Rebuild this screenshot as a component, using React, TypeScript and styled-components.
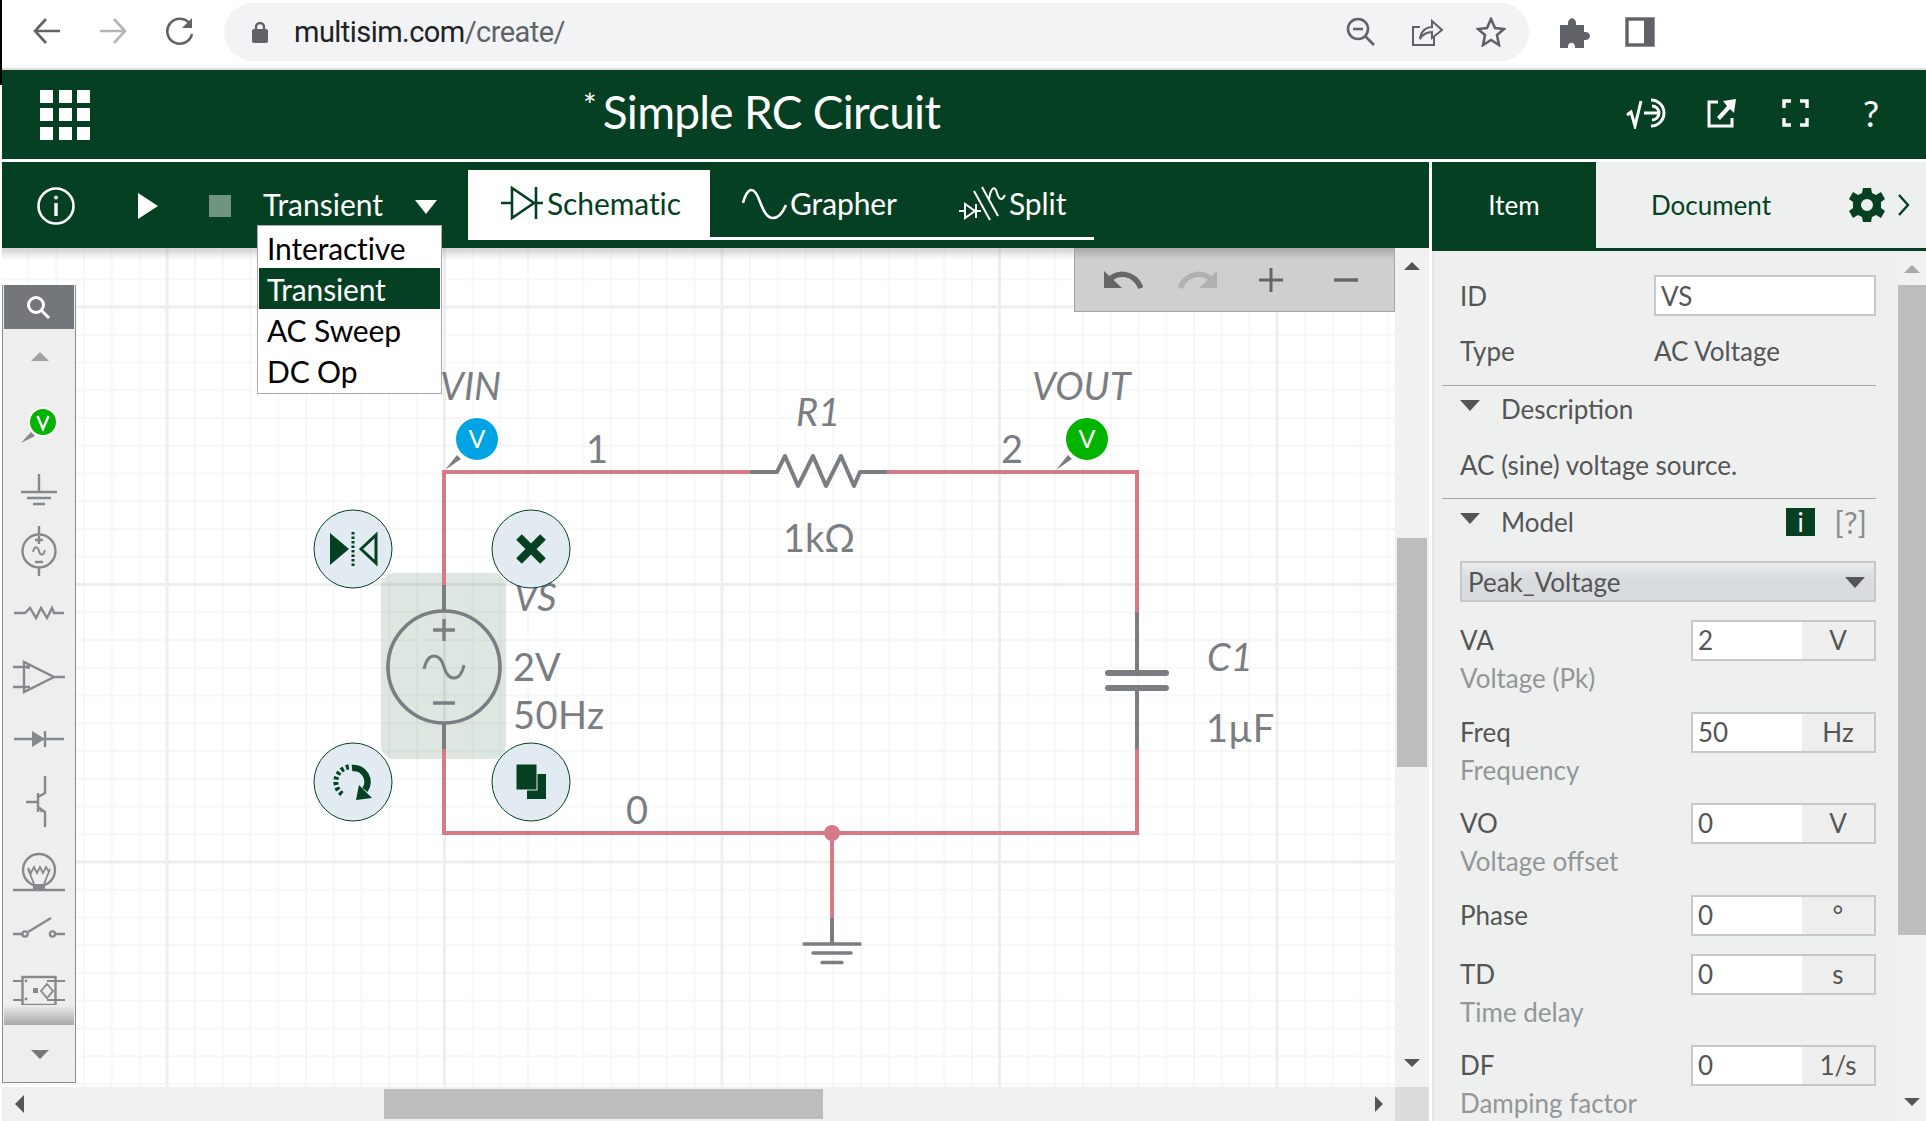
import React from "react";
import styled, { createGlobalStyle } from "styled-components";

const GREEN = "#054023";
const WIRE = "#d67a88";
const PART = "#7a7d82";

const GlobalStyle = createGlobalStyle`
  html, body {
    margin: 0;
    padding: 0;
    width: 1926px;
    height: 1121px;
    overflow: hidden;
    background: #fff;
    font-family: "Lato", "Liberation Sans", sans-serif;
  }
  * { box-sizing: border-box; }
`;

const Page = styled.div`
  position: relative;
  width: 1926px;
  height: 1121px;
  overflow: hidden;
  display: flex;
  flex-direction: column;
`;
const EdgeStrip = styled.div`
  position: absolute;
  left: 0;
  top: 0;
  width: 2px;
  height: 85px;
  background: #000;
  z-index: 9;
`;

/* browser bar */
const BrowserBar = styled.div`
  height: 70px;
  flex: none;
  display: flex;
  align-items: flex-start;
  padding: 3px 0 0 33px;
  border-bottom: 2px solid #dedfe0;
  background: #fff;
`;
const BrowserIcon = styled.svg<{ $gap: number; $faded?: boolean }>`
  flex: none;
  margin-left: ${(p) => p.$gap}px;
  fill: none;
  stroke: ${(p) => (p.$faded ? "#b3b5b8" : "#5f6368")};
  stroke-width: 2.6;
`;
const Omnibox = styled.div`
  flex: none;
  width: 1305px;
  height: 58px;
  margin-left: 29px;
  border-radius: 29px;
  background: #f1f3f4;
  display: flex;
  align-items: center;
  padding-left: 28px;
`;
const Url = styled.div`
  margin-left: 26px;
  font-family: "Roboto", sans-serif;
  font-size: 29px;
  letter-spacing: -0.55px;
  color: #202124;
  flex: 1;
  span { color: #5f6368; }
`;
const OmniEnd = styled.div`
  width: 23px;
  flex: none;
`;

/* app header */
const AppHeader = styled.div`
  height: 92px;
  flex: none;
  background: ${GREEN};
  border-bottom: 3px solid #fff;
  margin-left: 2px;
  display: flex;
  align-items: center;
  color: #fff;
`;
const AppGrid = styled.div`
  margin-left: 38px;
  width: 50px;
  height: 50px;
  display: grid;
  grid-template-columns: repeat(3, 13px);
  grid-template-rows: repeat(3, 13px);
  justify-content: space-between;
  align-content: space-between;
  i { background: #fff; }
`;
const Title = styled.div`
  margin: -5px 0 0 493px;
  width: 700px;
  font-size: 46px;
  letter-spacing: -0.75px;
  line-height: 50px;
  display: flex;
  sup {
    font-size: 32px;
    line-height: 36px;
    margin-right: 7px;
  }
`;
const HeaderIcons = styled.div`
  margin: -4px 0 0 343px;
  display: flex;
  align-items: center;
  gap: 39px;
  svg { display: block; }
`;
const Help = styled.span`
  font-size: 36px;
  margin-left: 15px;
  line-height: 40px;
`;

/* main */
const Main = styled.div`
  flex: 1;
  display: flex;
  min-height: 0;
  margin-left: 2px;
`;
const Editor = styled.div`
  position: relative;
  width: 1427px;
  flex: none;
  display: flex;
  flex-direction: column;
  background: #f0f0f0;
`;
const Toolbar = styled.div`
  height: 86px;
  flex: none;
  background: ${GREEN};
  display: flex;
  align-items: flex-start;
  color: #fff;
  font-size: 30px;
`;
const RunIcons = styled.div`
  display: flex;
  align-items: center;
  margin: 25px 0 0 35px;
  svg { display: block; }
`;
const StopSquare = styled.div`
  width: 22px;
  height: 22px;
  background: #6f9580;
  margin-left: 51px;
`;
const ModeLabel = styled.div`
  margin: 23px 0 0 32px;
  width: 152px;
  line-height: 38px;
`;
const ModeCaret = styled.div`
  width: 0;
  height: 0;
  margin: 38px 0 0 0;
  border-left: 11px solid transparent;
  border-right: 11px solid transparent;
  border-top: 14px solid #fff;
`;
const ViewTabs = styled.div`
  margin: 8px 0 0 31px;
  width: 626px;
  height: 70px;
  display: flex;
  border-bottom: 3px solid #fff;
`;
const ViewTab = styled.div<{ $active?: boolean; $width: number; $pad: number }>`
  width: ${(p) => p.$width}px;
  height: 70px;
  padding: 0 0 4px ${(p) => p.$pad}px;
  display: flex;
  align-items: center;
  gap: 3px;
  letter-spacing: -0.1px;
  background: ${(p) => (p.$active ? "#fff" : "transparent")};
  color: ${(p) => (p.$active ? GREEN : "#fff")};
  svg { flex: none; fill: none; stroke: currentColor; stroke-width: 2.6; }
`;

const CanvasRow = styled.div`
  flex: 1;
  display: flex;
  min-height: 0;
`;
const Canvas = styled.div`
  position: relative;
  width: 1393px;
  flex: none;
  overflow: hidden;
  background-color: #fff;
  background-image:
    linear-gradient(to bottom, #eeeeee 3px, transparent 3px),
    linear-gradient(to right, #eeeeee 3px, transparent 3px),
    linear-gradient(to bottom, #f7f7f7 2px, transparent 2px),
    linear-gradient(to right, #f7f7f7 2px, transparent 2px);
  background-size: 100% 277.5px, 277.5px 100%, 100% 27.75px, 27.75px 100%;
  background-repeat: repeat;
  background-position: 0 57.5px, 163.5px 0, 0 2.5px, 25.5px 0;
  &::before {
    content: "";
    position: absolute;
    left: 0;
    right: 0;
    top: 0;
    height: 12px;
    background: linear-gradient(rgba(60, 60, 60, 0.22), rgba(60, 60, 60, 0));
    z-index: 2;
  }
`;
const Diagram = styled.svg`
  position: absolute;
  left: -2px;
  top: 1px;
  font-family: "Lato", sans-serif;
  fill: ${PART};
`;
const VScroll = styled.div`
  flex: none;
  width: 34px;
  display: flex;
  flex-direction: column;
  align-items: center;
  background: #f1f1f1;
  position: relative;
  padding-top: 14px;
`;
const HScrollRow = styled.div`
  height: 34px;
  flex: none;
  display: flex;
  background: #f0f0f0;
`;
const HTrack = styled.div`
  width: 1393px;
  height: 34px;
  padding-left: 13px;
  display: flex;
  align-items: center;
  flex: none;
`;
const HThumb = styled.div`
  width: 439px;
  height: 30px;
  margin: 0 552px 0 360px;
  background: #bdbdbd;
`;
const Corner = styled.div`
  flex: 1;
  background: #dcdcdc;
`;
const Tri = styled.div<{ $dir: "up" | "down" | "left" | "right"; $size: number; $color?: string }>`
  flex: none;
  width: 0;
  height: 0;
  ${(p) => {
    const c = p.$color ?? "#555";
    const s = p.$size;
    const solid = Math.round(s * 1.05);
    if (p.$dir === "up") return `border-left:${s}px solid transparent;border-right:${s}px solid transparent;border-bottom:${solid}px solid ${c};`;
    if (p.$dir === "down") return `border-left:${s}px solid transparent;border-right:${s}px solid transparent;border-top:${solid}px solid ${c};`;
    if (p.$dir === "left") return `border-top:${s}px solid transparent;border-bottom:${s}px solid transparent;border-right:${solid}px solid ${c};`;
    return `border-top:${s}px solid transparent;border-bottom:${s}px solid transparent;border-left:${solid}px solid ${c};`;
  }}
`;
const VThumb = styled.div`
  width: 30px;
  height: 229px;
  background: #bdbdbd;
  margin: 268px 0 292px;
`;

/* floating over the canvas */
const ModeMenu = styled.div`
  position: absolute;
  left: 255px;
  top: 63px;
  width: 185px;
  height: 169px;
  background: #fff;
  border: 1px solid #a9a9a9;
  padding: 1px;
  z-index: 5;
  font-size: 30px;
`;
const ModeItem = styled.div<{ $selected?: boolean }>`
  height: 41px;
  line-height: 42px;
  padding-left: 8px;
  letter-spacing: -0.15px;
  color: ${(p) => (p.$selected ? "#fff" : "#000")};
  background: ${(p) => (p.$selected ? GREEN : "transparent")};
`;
const EditBar = styled.div`
  position: absolute;
  right: 0;
  top: 0;
  width: 321px;
  height: 64px;
  background: linear-gradient(#a9a9a9 0, #cfcfcf 12px);
  border: 1px solid #a3a3a3;
  border-top: 0;
  z-index: 3;
  display: flex;
  align-items: center;
  padding: 0 0 0 29px;
  gap: 35px;
  svg { display: block; flex: none; }
`;
const Palette = styled.div`
  position: absolute;
  left: 0;
  top: 37px;
  width: 74px;
  height: 798px;
  background: #eeeeee;
  border: 1px solid #8a8d90;
  border-top: 0;
  padding: 0 1px;
  display: flex;
  flex-direction: column;
  align-items: stretch;
  z-index: 3;
`;
const PaletteSearch = styled.div`
  height: 44px;
  flex: none;
  background: #73777b;
  display: flex;
  align-items: center;
  justify-content: center;
  padding-right: 2px;
`;
const PaletteArrow = styled.div<{ $height: number; $lift?: number }>`
  height: ${(p) => p.$height}px;
  flex: none;
  display: flex;
  align-items: center;
  justify-content: center;
  padding: 0 0 ${(p) => p.$lift ?? 0}px 2px;
`;
const PaletteFade = styled.div`
  height: 20px;
  flex: none;
  background: linear-gradient(rgba(168, 168, 168, 0), #a8a8a8);
`;
const PaletteIconSvg = styled.svg`
  display: block;
  flex: none;
  margin-left: -4px;
  fill: none;
  stroke: #85888c;
  stroke-width: 2.4;
`;

/* right panel */
const Side = styled.div`
  flex: 1;
  display: flex;
  flex-direction: column;
  min-width: 0;
  border-left: 3px solid #fff;
  background: #fff;
`;
const SideTabs = styled.div`
  height: 89px;
  flex: none;
  display: flex;
  border-bottom: 3px solid ${GREEN};
  font-size: 26px;
  background: #eef0ef;
`;
const SideTab = styled.div<{ $active?: boolean; $width: number }>`
  width: ${(p) => p.$width}px;
  flex: none;
  display: flex;
  align-items: center;
  justify-content: center;
  background: ${(p) => (p.$active ? GREEN : "transparent")};
  color: ${(p) => (p.$active ? "#fff" : GREEN)};
`;
const SideTools = styled.div`
  display: flex;
  align-items: center;
  gap: 13px;
  margin-left: 23px;
  svg { display: block; flex: none; }
`;
const SideBody = styled.div`
  flex: 1;
  display: flex;
  min-height: 0;
  border-left: 2px solid #dfe8ee;
`;
const Props = styled.div`
  width: 464px;
  flex: none;
  background: #eef0ef;
  overflow: hidden;
  padding: 24px 22px 0 26px;
  font-size: 26px;
  color: #555;
`;
const SideScroll = styled.div`
  flex: 1;
  background: #f1f1f1;
  display: flex;
  flex-direction: column;
  align-items: center;
  position: relative;
  padding-top: 14px;
`;
const SideThumb = styled.div`
  width: 100%;
  height: 650px;
  margin: 12px 0 163px;
  background: #bdbdbd;
`;
const Row = styled.div`
  display: flex;
  align-items: center;
  height: 41px;
`;
const RowLabel = styled.div`
  width: 194px;
  flex: none;
`;
const TextField = styled.div`
  width: 222px;
  height: 41px;
  background: #fff;
  border: 2px solid #c8c8c8;
  padding-left: 5px;
  line-height: 38px;
`;
const TypeRow = styled(Row)`
  margin-top: 14px;
`;
const Rule = styled.div`
  height: 1px;
  background: #a8a8a8;
  margin: 14px 0 0 -18px;
`;
const Heading = styled.div`
  height: 46px;
  display: flex;
  align-items: center;
  gap: 21px;
  position: relative;
  padding-right: 9px;
`;
const HeadingCaret = styled(Tri)`
  margin-top: -8px;
`;
const HeadingExtras = styled.div`
  margin-left: auto;
  display: flex;
  align-items: center;
  gap: 19px;
`;
const InfoBox = styled.div`
  width: 29px;
  height: 28px;
  background: ${GREEN};
  color: #fff;
  font-size: 26px;
  line-height: 28px;
  text-align: center;
`;
const HelpLink = styled.div`
  color: #8a8d8f;
  font-size: 31px;
  line-height: 28px;
`;
const DescText = styled.div`
  height: 46px;
  line-height: 46px;
  margin-top: 10px;
`;
const DescRule = styled(Rule)`
  margin-top: 10px;
`;
const SelectBox = styled.div`
  width: 416px;
  height: 41px;
  margin: 16px 0 18px;
  line-height: 41px;
  background: linear-gradient(#eaecee, #d8dcdf 45%);
  border: 2px solid #c8c8c8;
  display: flex;
  align-items: center;
  justify-content: space-between;
  padding: 2px 9px 0 6px;
`;
const ParamRow = styled.div<{ $hasDesc: boolean }>`
  margin-bottom: ${(p) => (p.$hasDesc ? 0 : 18)}px;
`;
const ParamLine = styled.div`
  display: flex;
  align-items: center;
  justify-content: space-between;
  height: 41px;
  line-height: 45px;
`;
const ParamInput = styled.div`
  width: 185px;
  height: 41px;
  border: 2px solid #c8c8c8;
  background: #eeeeee;
  display: flex;
`;
const ParamValue = styled.div`
  width: 109px;
  background: #fff;
  padding-left: 5px;
  line-height: 37px;
`;
const ParamUnit = styled.div`
  flex: 1;
  text-align: center;
  line-height: 37px;
`;
const ParamDesc = styled.div`
  height: 50.5px;
  line-height: 34px;
  color: #939698;
`;

const tabs = [
  { name: "Schematic", width: 242, pad: 32, active: true },
  { name: "Grapher", width: 242, pad: 32 },
  { name: "Split", width: 142, pad: 6 },
];

const params = [
  { label: "VA", value: "2", unit: "V", desc: "Voltage (Pk)" },
  { label: "Freq", value: "50", unit: "Hz", desc: "Frequency" },
  { label: "VO", value: "0", unit: "V", desc: "Voltage offset" },
  { label: "Phase", value: "0", unit: "°" },
  { label: "TD", value: "0", unit: "s", desc: "Time delay" },
  { label: "DF", value: "0", unit: "1/s", desc: "Damping factor" },
];

function PaletteIcon({ top, bottom, children }: { top: number; bottom: number; children: React.ReactNode }) {
  return (
    <PaletteIconSvg width={78} height={bottom - top} viewBox={`0 ${top} 78 ${bottom - top}`}>
      {children}
    </PaletteIconSvg>
  );
}

function PaletteIcons() {
  return (
    <>
      <PaletteIcon top={391} bottom={456}>
        <polygon points="21,443 31,432 35,436" fill="#85888c" stroke="none" />
        <circle cx="43" cy="422" r="14" fill="#00b400" stroke="#fff" strokeWidth="2" />
        <path d="M37.5 416 L43 429 L48.5 416" stroke="#fff" strokeWidth="2.4" />
      </PaletteIcon>
      <PaletteIcon top={456} bottom={520}>
        <path d="M39 474 V492 M21 492 H57 M27 498 H51 M33 504 H45" />
      </PaletteIcon>
      <PaletteIcon top={520} bottom={582}>
        <circle cx="39" cy="551" r="16.5" />
        <path d="M39 526 V534 M39 568 V576 M35 540 H43 M39 536 V544 M35 562 H43" />
        <path d="M33 552 C35 545 38 547 39 551 C40 555 43 557 45 550" strokeWidth="2" />
      </PaletteIcon>
      <PaletteIcon top={582} bottom={645}>
        <path d="M14 613 H25 L30 608 L36 618 L41 608 L47 618 L52 608 L54 613 H64" />
      </PaletteIcon>
      <PaletteIcon top={645} bottom={708}>
        <path d="M24 662 V692 L54 677 Z M54 677 H65 M13 667 H30 M13 687 H30 M28 665 V669" />
      </PaletteIcon>
      <PaletteIcon top={708} bottom={771}>
        <polygon points="32,731 32,747 45,739" fill="#85888c" stroke="none" />
        <path d="M14 739 H64 M45 731 V747" />
      </PaletteIcon>
      <PaletteIcon top={771} bottom={838}>
        <path d="M38 793 V812 M26 802 H38 M38 797 L45 793 V776 M38 808 L45 812 V827" />
        <polygon points="39,806 44,810 41,813" fill="#85888c" stroke="none" />
      </PaletteIcon>
      <PaletteIcon top={838} bottom={900}>
        <circle cx="39" cy="870" r="16" />
        <path d="M28 868 L31 873 L34 867 L37 873 L40 867 L43 873 L46 867 L49 872 M28 869 L34 884 M50 869 L44 884" strokeWidth="1.8" />
        <rect x="33" y="884" width="12" height="6" fill="#85888c" stroke="none" />
        <path d="M13 890 H65" />
      </PaletteIcon>
      <PaletteIcon top={900} bottom={962}>
        <path d="M13 934 H22 M28 932 L51 918 M55 934 H65" />
        <circle cx="25" cy="934" r="2.6" />
        <circle cx="52.5" cy="934" r="2.6" />
      </PaletteIcon>
      <PaletteIcon top={962} bottom={1005}>
        <rect x="22.5" y="977" width="33" height="28" />
        <path d="M13 981 H22 M13 1000 H22 M56 981 H65 M56 1000 H65 M47 984 L53 991 L47 998 L41 991 Z M47 981 H55 M47 1000 H55" strokeWidth="1.8" />
        <rect x="33" y="988" width="5" height="5" fill="#85888c" stroke="none" />
        <circle cx="26" cy="981" r="1.4" fill="#85888c" stroke="none" />
        <circle cx="26" cy="999" r="1.4" fill="#85888c" stroke="none" />
      </PaletteIcon>
    </>
  );
}

function Circuit() {
  const wire = { stroke: WIRE, strokeWidth: 4, fill: "none" };
  const part = { stroke: PART, strokeWidth: 4, fill: "none" };
  const handle = { fill: "#e1ebf1", stroke: GREEN, strokeWidth: 1 };
  return (
    <Diagram width="1395" height="839" viewBox="0 248 1395 839">
      <rect x="381" y="572" width="125" height="186" rx="14" fill="rgba(4,64,35,0.135)" />
      <path d="M444 584 V471 H750 M887 471 H1137 V611 M1137 748 V832 H444 V748" {...wire} />
      <path d="M832 832 V917" {...wire} />
      <circle cx="832" cy="832" r="8" fill={WIRE} />
      <path d="M444 584 V610 M444 722 V748" {...part} />
      <circle cx="444" cy="666" r="56" {...part} strokeWidth={3.6} />
      <path d="M433 629 H455 M444 618 V640 M433 702 H455" {...part} strokeWidth={3.4} />
      <path d="M424 668 C428 650 440 652 444 666 C448 680 460 682 464 664" {...part} strokeWidth={3} />
      <path d="M750 471 H777 L785 455 L798 485 L813 455 L826 485 L841 455 L854 485 L860 471 H887" {...part} strokeLinejoin="round" />
      <path d="M1137 611 V672 M1137 687 V748" {...part} />
      <path d="M1108 672 H1166 M1108 687 H1166" {...part} strokeWidth={6} strokeLinecap="round" />
      <path d="M832 917 V943" {...part} />
      <path d="M804 943 H860 M813 952 H851 M822 961.5 H842" {...part} strokeLinecap="round" strokeWidth={3.4} />

      <polygon points="445,469 457,454 461,458" fill={PART} />
      <circle cx="477" cy="438" r="22" fill="#00a3e4" stroke="#fff" strokeWidth="2" />
      <text x="477" y="447" fontSize="25" fill="#fff" textAnchor="middle">V</text>
      <polygon points="1056,469 1068,454 1072,458" fill={PART} />
      <circle cx="1087" cy="438" r="22" fill="#00b400" stroke="#fff" strokeWidth="2" />
      <text x="1087" y="447" fontSize="25" fill="#fff" textAnchor="middle">V</text>

      <g fontSize="38">
        <text x="440" y="399" fontStyle="italic">VIN</text>
        <text x="1032" y="399" fontStyle="italic">VOUT</text>
        <text x="796" y="425" fontStyle="italic">R1</text>
        <text x="586" y="462">1</text>
        <text x="1001" y="462">2</text>
        <text x="783" y="551">1kΩ</text>
        <text x="514" y="610" fontStyle="italic">VS</text>
        <text x="513" y="680">2V</text>
        <text x="513" y="728" letterSpacing="0.4">50Hz</text>
        <text x="626" y="823">0</text>
        <text x="1207" y="670" fontStyle="italic">C1</text>
        <text x="1206" y="741">1µF</text>
      </g>

      <circle cx="353" cy="548" r="39" {...handle} />
      <polygon points="330,532 330,564 349,548" fill={GREEN} />
      <path d="M353 531 V565" stroke={GREEN} strokeWidth="3" strokeDasharray="2.5 2" />
      <polygon points="361,548 376,534 376,562" fill="none" stroke={GREEN} strokeWidth="3" />

      <circle cx="531" cy="548" r="39" {...handle} />
      <path d="M519 536 L543 560 M543 536 L519 560" stroke={GREEN} strokeWidth="8" />

      <circle cx="353" cy="781" r="39" {...handle} />
      <path d="M352 767 A14 14 0 0 1 365 789" fill="none" stroke={GREEN} strokeWidth="6.5" />
      <polygon points="356,799 372,797 359,784" fill={GREEN} />
      <path d="M342 793 A15 15 0 0 1 349 766" fill="none" stroke={GREEN} strokeWidth="5" strokeDasharray="3 2.4" />

      <circle cx="531" cy="781" r="39" {...handle} />
      <rect x="527" y="773" width="19" height="25" fill={GREEN} />
      <rect x="516" y="763" width="21" height="26" fill={GREEN} stroke="#e1ebf1" strokeWidth="1" />
    </Diagram>
  );
}

export default function App() {
  return (
    <Page>
      <GlobalStyle />
      <EdgeStrip />
      <BrowserBar>
        <BrowserIcon $gap={0} width="28" height="56" viewBox="0 0 28 56">
          <path d="M27 28 H3 M13 16 L2 28 L13 40" />
        </BrowserIcon>
        <BrowserIcon $gap={38} $faded width="28" height="56" viewBox="0 0 28 56">
          <path d="M1 28 H25 M15 16 L26 28 L15 40" />
        </BrowserIcon>
        <BrowserIcon $gap={38} width="30" height="56" viewBox="0 0 30 56">
          <path d="M25 21 A12.5 12.5 0 1 0 27 31" />
          <polygon points="27,15 27,25 17,25" fill="#5f6368" stroke="none" />
        </BrowserIcon>
        <Omnibox>
          <svg width="16" height="22" viewBox="0 0 16 22">
            <path d="M4 9 V6 A4 4 0 0 1 12 6 V9" fill="none" stroke="#5f6368" strokeWidth="2.4" />
            <rect x="0" y="8" width="16" height="14" rx="2" fill="#5f6368" />
          </svg>
          <Url>
            multisim.com<span>/create/</span>
          </Url>
          <svg width="30" height="30" viewBox="0 0 30 30" fill="none" stroke="#5f6368" strokeWidth="2.6">
            <circle cx="12" cy="12" r="10" />
            <path d="M7 12 H17 M19 19 L28 28" />
          </svg>
          <BrowserIcon $gap={34} width="34" height="30" viewBox="0 0 34 30">
            <path d="M10 10 H3 V28 H24 V20 M10 22 C11 13 17 10 22 10 V4 L32 13 L22 21 V15 C17 15 13 17 10 22 Z" strokeWidth="2" />
          </BrowserIcon>
          <BrowserIcon $gap={32} width="30" height="30" viewBox="0 0 30 30">
            <polygon points="15,2 19,11 28,12 21,18 23,28 15,23 7,28 9,18 2,12 11,11" />
          </BrowserIcon>
          <OmniEnd />
        </Omnibox>
        <BrowserIcon $gap={30} width="32" height="56" viewBox="0 0 32 56">
          <path d="M1 22 H9 C8 13 18 13 17 22 H25 V29 C33 28 33 38 25 37 V45 H16 C17 38 8 38 9 45 H1 Z" fill="#5f6368" stroke="none" />
        </BrowserIcon>
        <BrowserIcon $gap={34} width="30" height="56" viewBox="0 0 30 56">
          <rect x="2" y="16" width="26" height="26" strokeWidth="3.4" />
          <rect x="19" y="16" width="9" height="26" fill="#5f6368" stroke="none" />
        </BrowserIcon>
      </BrowserBar>

      <AppHeader>
        <AppGrid>
          {Array.from({ length: 9 }, (_, i) => (
            <i key={i} />
          ))}
        </AppGrid>
        <Title>
          <sup>*</sup>Simple RC Circuit
        </Title>
        <HeaderIcons>
          <svg width="42" height="32" viewBox="0 0 42 32" fill="none" stroke="#fff" strokeWidth="3">
            <path d="M1 18 L5 15 L9 29 L15 4" />
            <path d="M25 3 A13 13 0 1 1 25 29 M26 9 A7 7 0 1 1 26 23 M18 16 H33" />
          </svg>
          <svg width="30" height="30" viewBox="0 0 30 30" fill="none" stroke="#fff" strokeWidth="3">
            <path d="M11 4 H2 V28 H25 V20" />
            <polygon points="29,1 16,3 20,8 10,19 13,22 23,11 27,15" fill="#fff" stroke="none" />
          </svg>
          <svg width="27" height="28" viewBox="0 0 27 28" fill="none" stroke="#fff" strokeWidth="3.4" style={{ marginLeft: 6 }}>
            <path d="M2 9 V2 H9 M18 2 H25 V9 M25 19 V26 H18 M9 26 H2 V19" />
          </svg>
          <Help>?</Help>
        </HeaderIcons>
      </AppHeader>

      <Main>
        <Editor>
          <Toolbar>
            <RunIcons>
              <svg width="38" height="38" viewBox="0 0 38 38" fill="none" stroke="#fff" strokeWidth="2.6">
                <circle cx="19" cy="19" r="17.5" />
                <path d="M19 16 V29" strokeWidth="3.4" />
                <circle cx="19" cy="10.5" r="2" fill="#fff" stroke="none" />
              </svg>
              <svg width="20" height="26" viewBox="0 0 20 26" style={{ marginLeft: 63 }}>
                <polygon points="0,0 20,13 0,26" fill="#fff" />
              </svg>
              <StopSquare />
            </RunIcons>
            <ModeLabel>Transient</ModeLabel>
            <ModeCaret />
            <ViewTabs>
              {tabs.map((t) => (
                <ViewTab key={t.name} $active={t.active} $width={t.width} $pad={t.pad}>
                  {t.name === "Schematic" && (
                    <svg width="44" height="34" viewBox="0 0 44 34">
                      <path d="M1 17 H12 M12 2 V32 L34 17 Z M36 1 V33 M36 17 H43" />
                    </svg>
                  )}
                  {t.name === "Grapher" && (
                    <svg width="45" height="34" viewBox="0 0 45 34">
                      <path d="M1 17 C5 2 11 0 16 11 C20 20 23 32 31 32 C37 32 41 26 44 19" />
                    </svg>
                  )}
                  {t.name === "Split" && (
                    <svg width="48" height="36" viewBox="0 0 48 36">
                      <path d="M1 26 H7 M7 19 V33 L17 26 Z M18 19 V33 M18 26 H23 M16 6 L32 35 M24 2 L40 31" strokeWidth="2" />
                      <path d="M31 14 C33 2 37 0 39 8 C41 15 44 16 47 10" strokeWidth="2" />
                    </svg>
                  )}
                  {t.name}
                </ViewTab>
              ))}
            </ViewTabs>
          </Toolbar>
          <ModeMenu>
            <ModeItem>Interactive</ModeItem>
            <ModeItem $selected>Transient</ModeItem>
            <ModeItem>AC Sweep</ModeItem>
            <ModeItem>DC Op</ModeItem>
          </ModeMenu>
          <CanvasRow>
            <Canvas>
              <Circuit />
              <Palette>
                <PaletteSearch>
                  <svg width="24" height="24" viewBox="0 0 24 24" fill="none" stroke="#fff" strokeWidth="3">
                    <circle cx="10" cy="10" r="7.5" />
                    <path d="M15.5 15.5 L23 23" />
                  </svg>
                </PaletteSearch>
                <PaletteArrow $height={62} $lift={8}>
                  <Tri $dir="up" $size={9} $color="#a0a0a0" />
                </PaletteArrow>
                <PaletteIcons />
                <PaletteFade />
                <PaletteArrow $height={58}>
                  <Tri $dir="down" $size={9} $color="#777" />
                </PaletteArrow>
              </Palette>
              <EditBar>
                <svg width="39" height="20" viewBox="0 0 39 20">
                  <polygon points="0,1 0,18 18,18" fill="#666" />
                  <path d="M5 10 C14 1 30 2 37 18" fill="none" stroke="#666" strokeWidth="5.5" />
                </svg>
                <svg width="39" height="20" viewBox="0 0 39 20">
                  <polygon points="39,1 39,18 21,18" fill="#b0b0b0" />
                  <path d="M34 10 C25 1 9 2 2 18" fill="none" stroke="#b0b0b0" strokeWidth="5.5" />
                </svg>
                <svg width="26" height="26" viewBox="0 0 26 26" stroke="#666" strokeWidth="3" style={{ marginLeft: 6 }}>
                  <path d="M13 1 V25 M1 13 H25" />
                </svg>
                <svg width="26" height="26" viewBox="0 0 26 26" stroke="#666" strokeWidth="3.4" style={{ marginLeft: 14 }}>
                  <path d="M1 13 H25" />
                </svg>
              </EditBar>
            </Canvas>
            <VScroll>
              <Tri $dir="up" $size={8} />
              <VThumb />
              <Tri $dir="down" $size={8} />
            </VScroll>
          </CanvasRow>
          <HScrollRow>
            <HTrack>
              <Tri $dir="left" $size={9} />
              <HThumb />
              <Tri $dir="right" $size={8} />
            </HTrack>
            <Corner />
          </HScrollRow>
        </Editor>

        <Side>
          <SideTabs>
            <SideTab $active $width={164}>
              Item
            </SideTab>
            <SideTab $width={230}>Document</SideTab>
            <SideTools>
              <svg width="36" height="36" viewBox="0 0 36 36">
                <path
                  fill={GREEN}
                  fillRule="evenodd"
                  d="M14 1 H22 L23 6 L27 8 L32 5 L36 12 L32 15 V21 L36 24 L32 31 L27 28 L23 30 L22 35 H14 L13 30 L9 28 L4 31 L0 24 L4 21 V15 L0 12 L4 5 L9 8 L13 6 Z M18 12 A6 6 0 1 0 18 24 A6 6 0 1 0 18 12 Z"
                />
              </svg>
              <svg width="12" height="22" viewBox="0 0 12 22" fill="none" stroke={GREEN} strokeWidth="2.4">
                <path d="M1 1 L10 11 L1 21" />
              </svg>
            </SideTools>
          </SideTabs>
          <SideBody>
            <Props>
              <Row>
                <RowLabel>ID</RowLabel>
                <TextField>VS</TextField>
              </Row>
              <TypeRow>
                <RowLabel>Type</RowLabel>
                AC Voltage
              </TypeRow>
              <Rule />
              <Heading>
                <HeadingCaret $dir="down" $size={10.5} />
                Description
              </Heading>
              <DescText>AC (sine) voltage source.</DescText>
              <DescRule />
              <Heading>
                <HeadingCaret $dir="down" $size={10.5} />
                Model
                <HeadingExtras>
                  <InfoBox>i</InfoBox>
                  <HelpLink>[?]</HelpLink>
                </HeadingExtras>
              </Heading>
              <SelectBox>
                Peak_Voltage
                <Tri $dir="down" $size={10.5} />
              </SelectBox>
              {params.map((p) => (
                <ParamRow key={p.label} $hasDesc={!!p.desc}>
                  <ParamLine>
                    {p.label}
                    <ParamInput>
                      <ParamValue>{p.value}</ParamValue>
                      <ParamUnit>{p.unit}</ParamUnit>
                    </ParamInput>
                  </ParamLine>
                  {p.desc && <ParamDesc>{p.desc}</ParamDesc>}
                </ParamRow>
              ))}
            </Props>
            <SideScroll>
              <Tri $dir="up" $size={8} $color="#a8a8a8" />
              <SideThumb />
              <Tri $dir="down" $size={8} />
            </SideScroll>
          </SideBody>
        </Side>
      </Main>
    </Page>
  );
}
